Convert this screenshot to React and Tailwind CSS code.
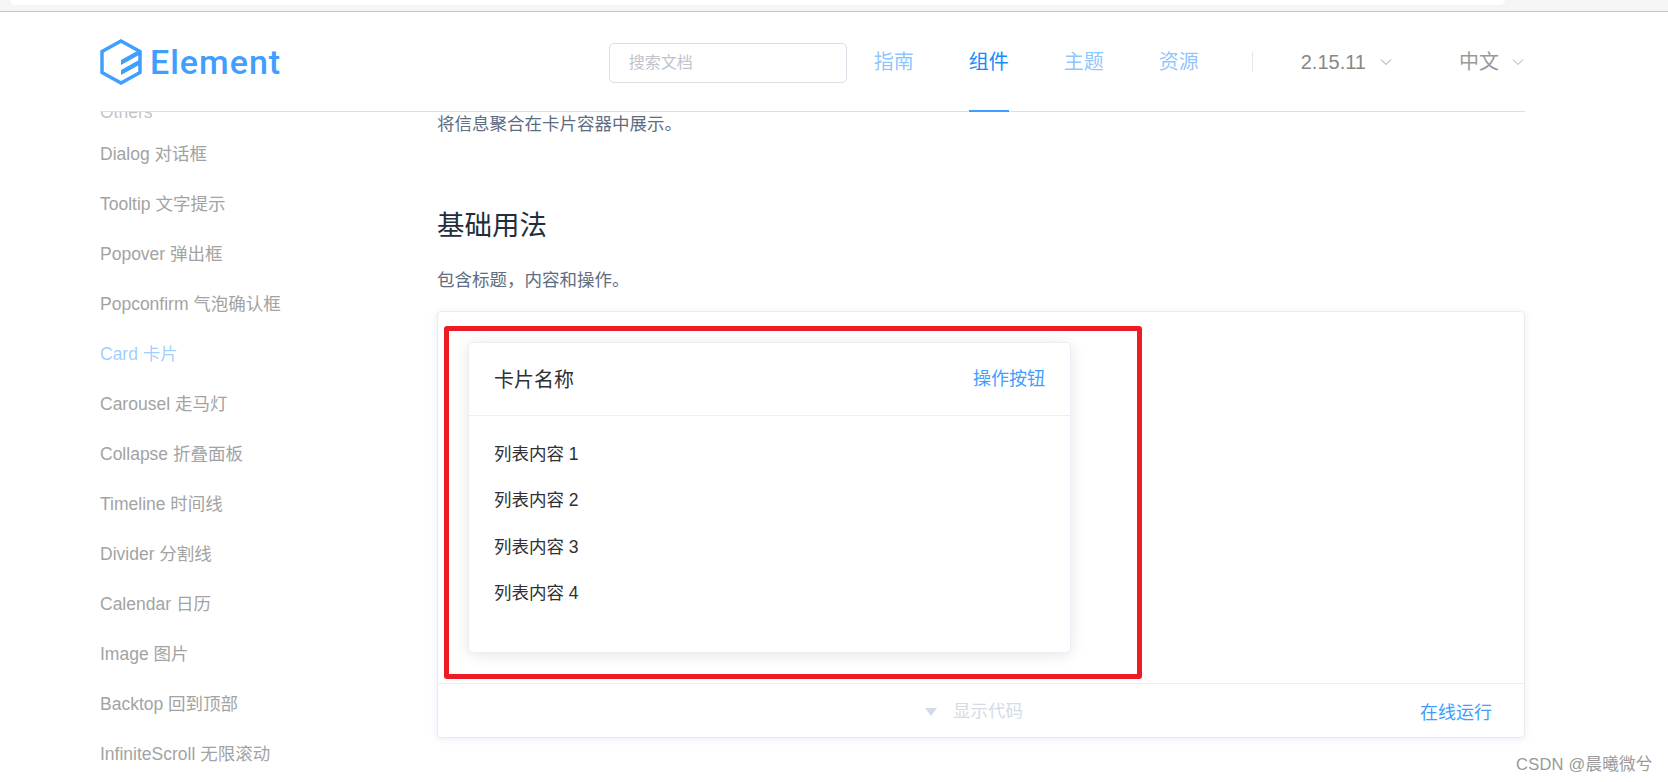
const NAV = [
  { label: '指南', active: false },
  { label: '组件', active: true },
  { label: '主题', active: false },
  { label: '资源', active: false },
]

const SIDE_ITEMS = [
  'Dialog 对话框',
  'Tooltip 文字提示',
  'Popover 弹出框',
  'Popconfirm 气泡确认框',
  'Card 卡片',
  'Carousel 走马灯',
  'Collapse 折叠面板',
  'Timeline 时间线',
  'Divider 分割线',
  'Calendar 日历',
  'Image 图片',
  'Backtop 回到顶部',
  'InfiniteScroll 无限滚动',
]

const LIST = ['列表内容 1', '列表内容 2', '列表内容 3', '列表内容 4']

const FONT = "font-['Liberation_Sans','Noto_Sans_CJK_SC',sans-serif]"

function Logo() {
  return (
    <div className="flex items-center gap-[8px] w-[183px]">
      <svg viewBox="0 0 42 46" className="w-[42px] h-[46px] shrink-0" fill="none">
        <path d="M21 2 L40 12.5 V33.5 L21 44 L2 33.5 V12.5 Z" stroke="#409eff" strokeWidth="3.5" />
        <path d="M21 21 L39 11 V16 L21 26 Z" fill="#409eff" />
        <path d="M21 31 L39 21 V26 L21 36 Z" fill="#409eff" />
      </svg>
      <span className="font-['Roboto',sans-serif] font-medium text-[34px] leading-none tracking-[1px] text-[#409eff]">Element</span>
    </div>
  )
}

function Chevron({ className }) {
  return (
    <svg viewBox="0 0 12 8" fill="none" stroke="currentColor" strokeWidth="1" className={className}>
      <path d="M1 1.5 L6 6.5 L11 1.5" />
    </svg>
  )
}

function Header() {
  return (
    <header className="relative z-10 h-[100px] ml-[100px] w-[1425px] flex items-center justify-between bg-white border-b border-[#dcdfe6]">
      <Logo />
      <div className="flex items-center">
        <div className="w-[238px] h-[40px] mt-[2px] rounded-[5px] border border-[#dcdfe6] flex items-center pl-[19px] pt-[1px] text-[16px] text-[#c0c4cc]">搜索文档</div>
        <nav className="flex items-center ml-[27px] gap-[55px]">
          {NAV.map((n) => (
            <a key={n.label} className={n.active
              ? 'relative h-[99px] flex items-center text-[20px] text-[#1989fa]'
              : 'relative h-[99px] flex items-center text-[20px] text-[#409eff]/60'}>
              {n.label}
              {n.active && <span className="absolute left-0 right-0 -bottom-px h-[2px] bg-[#409eff]" />}
            </a>
          ))}
        </nav>
        <span className="w-px h-[20px] bg-[#e6e6e6] ml-[53px]" />
        <span className="ml-[48px] text-[20px] text-[#888]">2.15.11</span>
        <Chevron className="w-[12px] h-[8px] ml-[14px] text-[#999]" />
        <span className="ml-[67px] text-[20px] text-[#999]">中文</span>
        <Chevron className="w-[12px] h-[8px] ml-[13px] mr-[1px] text-[#aaa]" />
      </div>
    </header>
  )
}

function Sidebar() {
  return (
    <aside className="w-[437px] shrink-0 pl-[100px]">
      <div className="h-[27px] -mt-[10px] text-[17.5px] leading-[20px] text-[#c4c4c4]">Others</div>
      <ul>
        {SIDE_ITEMS.map((item) => (
          <li key={item} className={item.startsWith('Card')
            ? 'h-[50px] flex items-center text-[17.5px] text-[#409eff]/50'
            : 'h-[50px] flex items-center text-[17.5px] text-[#a3a3a3]'}>
            {item}
          </li>
        ))}
      </ul>
    </aside>
  )
}

function DemoCard() {
  return (
    <div className="w-[603px] rounded-[5px] border border-[#ebeef5] bg-white shadow-[0_2px_15px_0_rgba(0,0,0,0.1)] text-[#303133]">
      <div className="h-[73px] px-[25px] pt-[1px] flex items-center justify-between border-b border-[#ebeef5]">
        <span className="text-[20px]">卡片名称</span>
        <span className="text-[18px] text-[#409eff]">操作按钮</span>
      </div>
      <div className="pt-[27px] px-[25px] pb-[24px] text-[17.5px] leading-[23.75px]">
        {LIST.map((t) => (
          <div key={t} className="mb-[22.5px]">{t}</div>
        ))}
      </div>
    </div>
  )
}

function Main() {
  return (
    <main className="w-[1088px] text-[#5e6d82]">
      <p className="text-[17.5px] leading-[24px] mt-0">将信息聚合在卡片容器中展示。</p>
      <h3 className="mt-[72px] text-[27.5px] leading-[36px] text-[#1f2f3d] font-normal">基础用法</h3>
      <p className="mt-[24px] text-[17.5px] leading-[24px]">包含标题，内容和操作。</p>
      <div className="relative mt-[19px] rounded-[4px] border border-[#ebebeb] shadow-[0_0_8px_0_rgba(232,237,250,0.6),0_2px_4px_0_rgba(232,237,250,0.5)]">
        <div className="p-[30px]">
          <DemoCard />
        </div>
        <div className="h-[54px] border-t border-[#eaeefb] flex items-center relative">
          <div className="ml-[487px] mt-[2px] flex items-center text-[17.5px] text-[#d3dce6]">
            <span className="w-0 h-0 border-x-[6.5px] border-x-transparent border-t-[8px] border-t-[#d3dce6] mr-[16px]" />
            显示代码
          </div>
          <span className="ml-auto mr-[32px] mt-[5px] text-[18px] text-[#409eff]">在线运行</span>
        </div>
        {/* red annotation drawn on the screenshot */}
        <div className="absolute left-[6px] top-[14px] w-[698px] h-[353px] rounded-[3px] border-[5px] border-[#ed1c24]" />
      </div>
    </main>
  )
}

export default function App() {
  return (
    <div className={`relative w-[1668px] h-[782px] overflow-hidden bg-white ${FONT}`}>
      <div className="h-[12px] bg-[#f5f5f5] border-b border-[#c4c4c4]">
        <div className="h-[5px] ml-[10px] w-[1495px] bg-white rounded-b-[10px]" />
      </div>
      <Header />
      <div className="flex h-[670px] overflow-hidden">
        <Sidebar />
        <Main />
      </div>
      <span className="absolute left-[1516px] top-[754px] text-[16.5px] tracking-[0.25px] leading-[20px] text-[#999]">CSDN @晨曦微兮</span>
    </div>
  )
}
